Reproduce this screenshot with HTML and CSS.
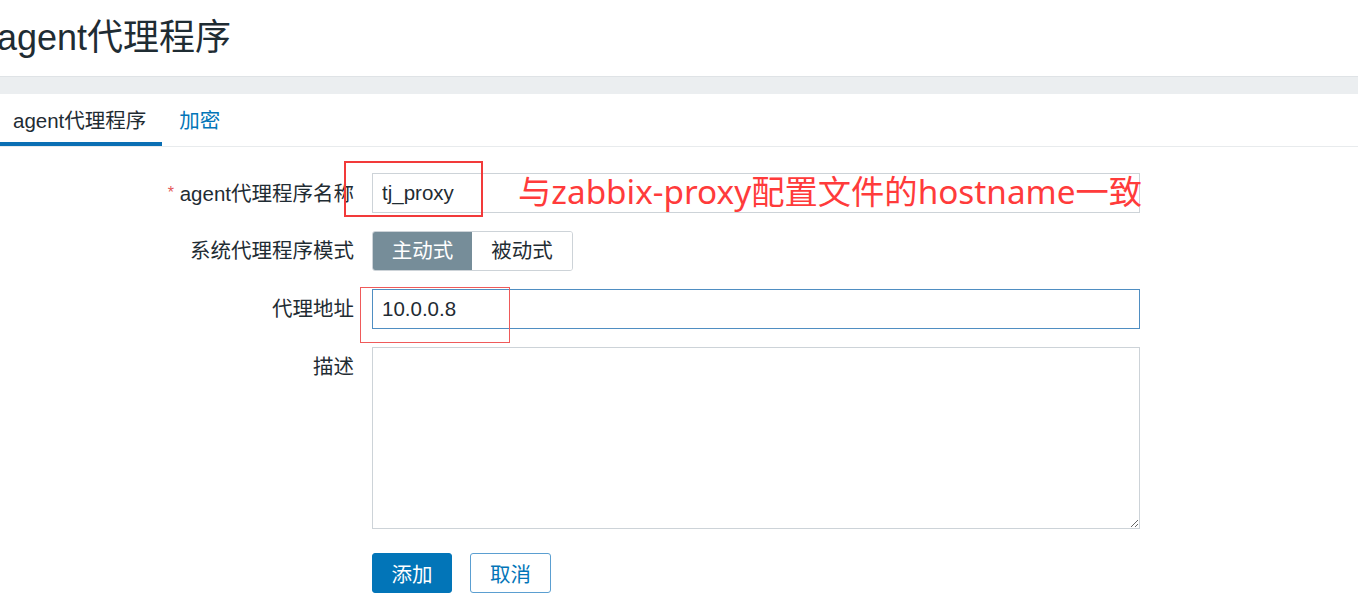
FILE: index.html
```html
<!DOCTYPE html>
<html lang="zh-CN">
<head>
<meta charset="utf-8">
<title>agent代理程序</title>
<link rel="stylesheet" href="styles.css">
</head>
<body>
<header class="page-head">
  <h1 class="page-title">agent代理程序</h1>
</header>
<div class="band"></div>
<nav class="tabs">
  <a class="tab tab-active">agent代理程序</a>
  <a class="tab">加密</a>
</nav>
<form class="form">
  <label class="label"><span class="req">*</span> agent代理程序名称</label>
  <div class="field">
    <input class="input" type="text" value="tj_proxy">
    <div class="mark mark-name"></div>
    <div class="note">与zabbix-proxy配置文件的hostname一致</div>
  </div>

  <label class="label">系统代理程序模式</label>
  <div class="field">
    <div class="segmented">
      <span class="seg seg-on">主动式</span>
      <span class="seg">被动式</span>
    </div>
  </div>

  <label class="label">代理地址</label>
  <div class="field">
    <input class="input input-focus" type="text" value="10.0.0.8">
    <div class="mark mark-addr"></div>
  </div>

  <label class="label">描述</label>
  <div class="field">
    <textarea class="textarea"></textarea>
  </div>

  <div class="buttons">
    <button type="button" class="btn btn-primary">添加</button>
    <button type="button" class="btn btn-alt">取消</button>
  </div>
</form>
</body>
</html>
```
FILE: styles.css
```css
html, body {
  margin: 0;
  padding: 0;
  background: #ffffff;
  overflow: hidden;
}
body {
  width: 1358px;
  height: 612px;
  font-family: "Liberation Sans", "Noto Sans CJK SC", sans-serif;
  color: #1f2c33;
}

.page-head {
  height: 76px;
  display: flex;
  align-items: center;
}
.page-title {
  margin: 0 0 0 -3px;
  font-size: 36px;
  font-weight: normal;
  line-height: 40px;
  color: #1f2c33;
}

.band {
  height: 17px;
  background: #ebeef0;
  border-top: 1px solid #dfe3e6;
}

.tabs {
  display: flex;
  height: 52px;
  border-bottom: 1px solid #e8ebed;
}
.tab {
  box-sizing: border-box;
  height: 52px;
  padding: 4px 16px 0 17px;
  font-size: 20.5px;
  line-height: 46px;
  color: #0275b8;
  border-bottom: 4px solid transparent;
}
.tab-active {
  padding-left: 13px;
  color: #1f2c33;
  border-bottom-color: #0a6fb4;
}

.form {
  display: grid;
  grid-template-columns: 354px 768px;
  column-gap: 18px;
  row-gap: 18px;
  padding-top: 26px;
  font-size: 20.5px;
}
.label {
  text-align: right;
  line-height: 39px;
  white-space: nowrap;
}
.req {
  color: #e45959;
  font-size: 16px;
  vertical-align: 3px;
}
.field {
  position: relative;
}
.input {
  display: block;
  box-sizing: border-box;
  width: 768px;
  height: 40px;
  margin: 0;
  padding: 0 9px;
  border: 1px solid #cdd3d8;
  background: #fff;
  font-family: "Liberation Sans", "Noto Sans CJK SC", sans-serif;
  font-size: 20.5px;
  color: #1f2c33;
  outline: none;
}
.input-focus {
  border-color: #4f8ec2;
}
.segmented {
  display: inline-flex;
  height: 40px;
  box-sizing: border-box;
  border: 1px solid #cdd3d8;
  border-radius: 3px;
  overflow: hidden;
}
.seg {
  box-sizing: border-box;
  width: 100px;
  text-align: center;
  line-height: 38px;
  color: #1f2c33;
  background: #fff;
}
.seg-on {
  width: 99px;
  background: #768d99;
  color: #fff;
}
.textarea {
  display: block;
  box-sizing: border-box;
  width: 768px;
  height: 182px;
  margin: 0;
  padding: 8px 9px;
  border: 1px solid #cdd3d8;
  font-family: "Liberation Sans", "Noto Sans CJK SC", sans-serif;
  font-size: 20px;
  resize: both;
  outline: none;
}

.buttons {
  grid-column: 2;
  display: flex;
  gap: 18px;
  margin-top: 6px;
}
.btn {
  box-sizing: border-box;
  height: 40px;
  padding: 0;
  border-radius: 3px;
  font-family: "Liberation Sans", "Noto Sans CJK SC", sans-serif;
  font-size: 20.5px;
  cursor: pointer;
}
.btn-primary {
  width: 80px;
  background: #0275b8;
  border: 1px solid #0275b8;
  color: #fff;
}
.btn-alt {
  width: 81px;
  background: #fff;
  border: 1px solid #5b9fd1;
  color: #0275b8;
}

.mark {
  position: absolute;
  box-sizing: border-box;
  pointer-events: none;
}
.mark-name {
  left: -28px;
  top: -12px;
  width: 139px;
  height: 56px;
  border: 2px solid #f23a3a;
}
.mark-addr {
  left: -12px;
  top: -2px;
  width: 150px;
  height: 56px;
  border: 1px solid #ef5a5a;
}
.note {
  position: absolute;
  left: 146px;
  top: -2px;
  font-family: "Noto Sans", "Noto Sans CJK SC", sans-serif;
  font-size: 33.3px;
  line-height: 40px;
  color: #ff3b3b;
  white-space: nowrap;
}
```
